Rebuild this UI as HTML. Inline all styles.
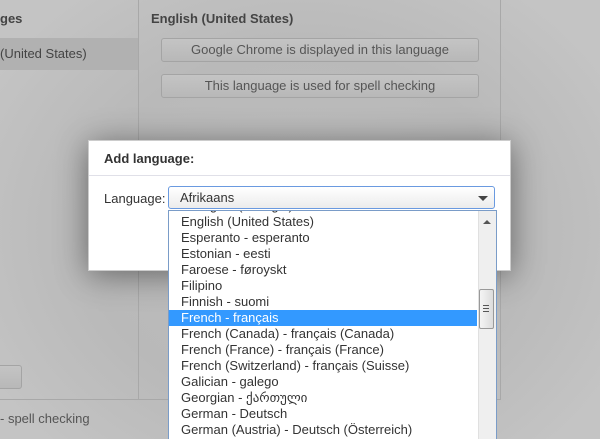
<!DOCTYPE html>
<html><head><style>
body{margin:0;width:600px;height:439px;overflow:hidden;position:relative;font-family:"Liberation Sans","DejaVu Sans",sans-serif;background:radial-gradient(ellipse 360px 300px at 300px 230px,#bdbdbd 0%,#b9b9b9 60%,#c4c4c4 100%);}
.abs{position:absolute}
.btn{position:absolute;border:1px solid #a4a4a4;border-radius:3px;background:linear-gradient(#c4c4c4,#b8b8b8);color:#555;font-size:13px;text-align:center;line-height:22px}
.list div{height:16px;line-height:16px;padding-left:12px;font-size:13px;color:#333;white-space:nowrap}
</style></head><body>
<div class="abs" style="left:0;top:38px;width:138px;height:32px;background:#b1b1b1"></div>
<div class="abs" style="left:0;top:11px;font-size:13px;font-weight:bold;color:#444">ges</div>
<div class="abs" style="left:0;top:46px;font-size:13px;color:#444">(United States)</div>
<div class="abs" style="left:138px;top:0;width:1px;height:400px;background:#a8a8a8"></div>
<div class="abs" style="left:500px;top:0;width:1px;height:400px;background:#a8a8a8"></div>
<div class="abs" style="left:0;top:399px;width:500px;height:1px;background:#a8a8a8"></div>
<div class="abs" style="left:151px;top:11px;font-size:13px;font-weight:bold;color:#444">English (United States)</div>
<div class="btn" style="left:161px;top:38px;width:316px;height:22px">Google Chrome is displayed in this language</div>
<div class="btn" style="left:161px;top:74px;width:316px;height:22px">This language is used for spell checking</div>
<div class="btn" style="left:-4px;top:365px;width:24px;height:22px"></div>
<div class="abs" style="left:0;top:411px;font-size:13px;color:#555">- spell checking</div>
<div class="abs" style="left:88px;top:140px;width:423px;height:131px;background:#fff;box-shadow:0 4px 30px rgba(0,0,0,.45);border:1px solid #ccc;box-sizing:border-box"></div>
<div class="abs" style="left:104px;top:151px;font-size:13px;font-weight:bold;color:#333">Add language:</div>
<div class="abs" style="left:89px;top:175px;width:421px;height:1px;background:#e0e0e8"></div>
<div class="abs" style="left:104px;top:191px;font-size:13px;color:#333">Language:</div>
<div class="abs" style="left:168px;top:186px;width:327px;height:23px;box-sizing:border-box;border:1px solid #6a9ae0;border-radius:3px;background:linear-gradient(#fff,#ececec);font-size:13px;color:#333;line-height:21px;padding-left:11px">Afrikaans
<div class="abs" style="right:6px;top:9px;width:0;height:0;border-left:5px solid transparent;border-right:5px solid transparent;border-top:5px solid #444"></div></div>
<div class="abs" style="left:168px;top:210px;width:329px;height:229px;box-sizing:border-box;border:1px solid #7a9cc8;border-bottom:none;background:#fff;overflow:hidden">
<div class="list abs" style="left:0;top:-13px;width:308px">
<div>Georgian (Georgia)</div>
<div>English (United States)</div>
<div>Esperanto - esperanto</div>
<div>Estonian - eesti</div>
<div>Faroese - føroyskt</div>
<div>Filipino</div>
<div>Finnish - suomi</div>
<div style="background:#3399ff;color:#fff">French - français</div>
<div>French (Canada) - français (Canada)</div>
<div>French (France) - français (France)</div>
<div>French (Switzerland) - français (Suisse)</div>
<div>Galician - galego</div>
<div>Georgian - ქართული</div>
<div>German - Deutsch</div>
<div>German (Austria) - Deutsch (Österreich)</div>
</div>
<div class="abs" style="left:309px;top:0;width:18px;height:229px;background:#efefef;border-left:1px solid #e0e0e0"></div>
<div class="abs" style="left:314px;top:9px;width:0;height:0;border-left:4px solid transparent;border-right:4px solid transparent;border-bottom:4px solid #555"></div>
<div class="abs" style="left:310px;top:78px;width:15px;height:40px;box-sizing:border-box;border:1px solid #999;border-radius:2px;background:linear-gradient(90deg,#f4f4f4,#dcdcdc)"></div>
<div class="abs" style="left:314px;top:94px;width:6px;height:1px;background:#555;box-shadow:0 3px 0 #555,0 6px 0 #555"></div>
</div>
</body></html>
